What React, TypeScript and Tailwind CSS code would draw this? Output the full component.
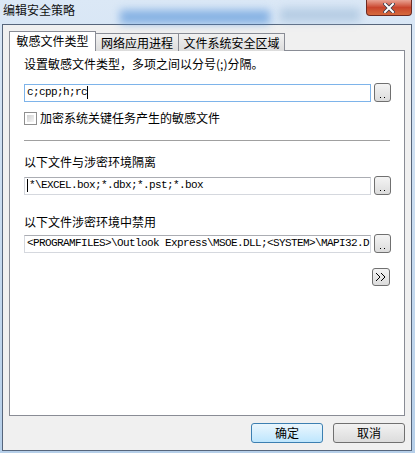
import React from "react";

const ui = { fontFamily: '"Noto Sans CJK SC", "Microsoft YaHei", sans-serif' };
const mono = { fontFamily: '"Liberation Mono", "Noto Sans CJK SC", monospace', letterSpacing: "-0.6px" };

function DotButton() {
  return (
    <div className="w-[17px] h-[19px] rounded-[3px] border border-[#707070] bg-gradient-to-b from-[#f4f4f4] to-[#dcdcdc] flex items-end justify-center pb-[3px]">
      <div className="flex gap-[3px]">
        <div className="w-[1px] h-[1px] bg-black" />
        <div className="w-[1px] h-[1px] bg-black" />
      </div>
    </div>
  );
}

function InputRow({ text, focused, caretStart, caretEnd }: { text: string; focused?: boolean; caretStart?: boolean; caretEnd?: boolean }) {
  return (
    <div className="flex items-center gap-[3px]">
      <div
        className={
          "w-[347px] h-[18px] bg-white border flex items-center pl-[2px] overflow-hidden whitespace-nowrap text-[11px] text-black " +
          (focused ? "border-[#7eb4ea]" : "border-[#d5d8de] border-t-[#abadb3]")
        }
        style={mono}
      >
        {caretStart && <span className="inline-block w-[1px] h-[13px] bg-black mr-[1px]" />}
        <span>{text}</span>
        {caretEnd && <span className="inline-block w-[1px] h-[13px] bg-black" />}
      </div>
      <DotButton />
    </div>
  );
}

export default function App() {
  return (
    <div className="w-[415px] h-[453px] relative overflow-hidden bg-gradient-to-b from-[#dbe8f6] to-[#b6cfe9] flex flex-col" style={ui}>
      {/* title bar */}
      <div className="h-[24px] relative flex items-start">
        <div className="absolute left-[120px] top-[10px] w-[150px] h-[14px] bg-[#4f8fd8] opacity-60 blur-[4px]" />
        <div className="absolute left-[280px] top-[8px] w-[80px] h-[14px] bg-[#9fbcd9] opacity-60 blur-[4px]" />
        <span className="relative ml-[3px] mt-[2px] text-[12px] leading-[16px] text-[#111]">编辑安全策略</span>
        <div className="absolute right-[3px] top-0 w-[46px] h-[16px] rounded-b-[4px] border border-t-0 border-[#6d2a22] bg-gradient-to-b from-[#e8a293] via-[#c9452d] to-[#d56a3e] flex items-center justify-center">
          <svg width="12" height="10" viewBox="0 0 12 10">
            <path d="M2 1 L10 9 M10 1 L2 9" stroke="#3a3a4a" strokeWidth="3.6" strokeLinecap="square" />
            <path d="M2 1 L10 9 M10 1 L2 9" stroke="#ffffff" strokeWidth="2" strokeLinecap="square" />
          </svg>
        </div>
      </div>
      {/* client */}
      <div className="ml-[2px] mr-[3px] h-[427px] border border-[#56657b] bg-[#f0f0f0] flex flex-col pt-[6px] pl-[6px] pr-[6px]">
        {/* tabs */}
        <div className="flex items-end h-[20px] relative z-10 text-[12px] leading-[16px] text-black">
          <div className="h-[20px] w-[87px] bg-white border border-b-0 border-[#898c95] flex items-start justify-center pt-[1px]">敏感文件类型</div>
          <div className="h-[18px] w-[83px] bg-gradient-to-b from-[#f2f2f2] to-[#dcdcdc] border border-l-0 border-b-0 border-[#898c95] flex items-center justify-center">网络应用进程</div>
          <div className="h-[18px] w-[106px] bg-gradient-to-b from-[#f2f2f2] to-[#dcdcdc] border border-l-0 border-b-0 border-[#898c95] flex items-center justify-center">文件系统安全区域</div>
        </div>
        {/* panel */}
        <div className="-mt-[1px] h-[366px] bg-white border border-[#898c95] flex flex-col pl-[14px] pt-[5px] text-[12px] text-black">
          <div className="h-[16px] leading-[16px]">设置敏感文件类型，多项之间以分号(;)分隔。</div>
          <div className="mt-[11px]">
            <InputRow text="c;cpp;h;rc" focused caretEnd />
          </div>
          <div className="mt-[9px] h-[14px] flex items-center gap-[3px]">
            <div className="w-[13px] h-[13px] border border-[#8f8f8f] bg-white p-[2px]">
              <div className="w-full h-full bg-gradient-to-br from-[#d0d0d0] to-[#f6f6f6]" />
            </div>
            <span className="leading-[16px]">加密系统关键任务产生的敏感文件</span>
          </div>
          <div className="mt-[15px] w-[366px] h-[1px] bg-[#a0a0a0]" />
          <div className="mt-[13px] h-[16px] leading-[16px]">以下文件与涉密环境隔离</div>
          <div className="mt-[6px]">
            <InputRow text="*\EXCEL.box;*.dbx;*.pst;*.box" caretStart />
          </div>
          <div className="mt-[19px] h-[16px] leading-[16px]">以下文件涉密环境中禁用</div>
          <div className="mt-[4px]">
            <InputRow text="<PROGRAMFILES>\Outlook Express\MSOE.DLL;<SYSTEM>\MAPI32.D" />
          </div>
          <div className="mt-[15px] flex justify-end w-[366px]">
            <div className="w-[18px] h-[18px] rounded-[3px] border border-[#707070] bg-gradient-to-b from-[#f4f4f4] to-[#dcdcdc] flex items-center justify-center">
              <svg width="12" height="10" viewBox="0 0 12 10">
                <path d="M1 1 L5 5 L1 9 M6 1 L10 5 L6 9" stroke="#000" strokeWidth="1" fill="none" />
              </svg>
            </div>
          </div>
        </div>
        {/* buttons */}
        <div className="mt-[7px] flex justify-end gap-[10px] text-[12px] text-black">
          <div className="w-[72px] h-[20px] rounded-[3px] border border-[#3c7fb1] bg-gradient-to-b from-[#eaf6fd] to-[#bee6fd] flex items-center justify-center leading-[16px]">确定</div>
          <div className="w-[72px] h-[20px] rounded-[3px] border border-[#707070] bg-gradient-to-b from-[#f2f2f2] to-[#dcdcdc] flex items-center justify-center leading-[16px]">取消</div>
        </div>
      </div>
    </div>
  );
}
